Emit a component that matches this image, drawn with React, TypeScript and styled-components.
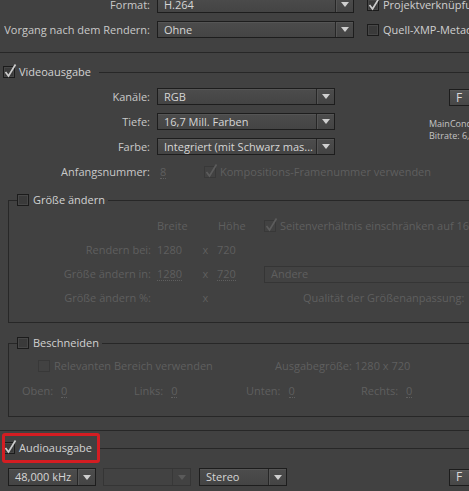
import React from "react";
import styled, { createGlobalStyle } from "styled-components";

const Global = createGlobalStyle`
  html, body { margin: 0; padding: 0; background: #414141; }
  * { box-sizing: border-box; }
`;

const Page = styled.div`
  width: 469px;
  height: 491px;
  overflow: hidden;
  background: #414141;
  font-family: "Open Sans", "DejaVu Sans", sans-serif;
  font-size: 11px;
  line-height: 14px;
  color: #c9c9c9;
`;

const TopGrid = styled.div`
  display: grid;
  grid-template-columns: 157px 210px 1fr;
  grid-auto-rows: 17px;
  row-gap: 8px;
  margin-top: -4px;
  align-items: center;
`;

const Label = styled.span<{ $disabled?: boolean }>`
  justify-self: end;
  padding-right: 7px;
  white-space: nowrap;
  color: ${(p) => (p.$disabled ? "#5f5f5f" : "#c9c9c9")};
`;

const Text = styled.span<{ $disabled?: boolean; $ml?: number }>`
  white-space: nowrap;
  color: ${(p) => (p.$disabled ? "#5f5f5f" : "#cfcfcf")};
  margin-left: ${(p) => p.$ml ?? 0}px;
`;

const Value = styled.span<{ $w?: number; $ml?: number }>`
  display: inline-block;
  flex: none;
  width: ${(p) => (p.$w ? `${p.$w}px` : "auto")};
  margin-left: ${(p) => p.$ml ?? 0}px;
  color: #5f5f5f;
  white-space: nowrap;
`;

const Dotted = styled.span`
  border-bottom: 1px dotted #5f5f5f;
  line-height: 12px;
  display: inline-block;
`;

const SelectBox = styled.div<{ $w: number; $disabled?: boolean; $h?: number }>`
  flex: none;
  width: ${(p) => p.$w}px;
  height: ${(p) => p.$h ?? 17}px;
  display: flex;
  align-items: stretch;
  border: 1px solid ${(p) => (p.$disabled ? "#353535" : "#1d1d1d")};
  background: ${(p) =>
    p.$disabled ? "#424242" : "linear-gradient(#4c4c4c, #444444)"};
  box-shadow: ${(p) => (p.$disabled ? "none" : "inset 0 1px 0 #555")};
`;

const SelectText = styled.span<{ $disabled?: boolean }>`
  flex: 1;
  padding-left: 6px;
  display: flex;
  align-items: center;
  white-space: nowrap;
  overflow: hidden;
  color: ${(p) => (p.$disabled ? "#5f5f5f" : "#d6d6d6")};
`;

const ArrowPart = styled.span<{ $disabled?: boolean }>`
  width: 18px;
  display: flex;
  align-items: center;
  justify-content: center;
  border-left: 1px solid ${(p) => (p.$disabled ? "#383838" : "#262626")};
  box-shadow: inset 1px 0 0 ${(p) => (p.$disabled ? "transparent" : "#555")};
`;

const Select: React.FC<{ w: number; text?: string; disabled?: boolean; noArrow?: boolean; h?: number }> = ({
  w,
  text,
  disabled,
  noArrow,
  h,
}) => (
  <SelectBox $w={w} $disabled={disabled} $h={h}>
    <SelectText $disabled={disabled}>{text}</SelectText>
    {!noArrow && (
      <ArrowPart $disabled={disabled}>
        <svg width="8" height="5" viewBox="0 0 8 5">
          <path d="M0 0 H8 L4 5 Z" fill={disabled ? "#5a5a5a" : "#cfcfcf"} />
        </svg>
      </ArrowPart>
    )}
  </SelectBox>
);

const CheckBoxBox = styled.span<{ $disabled?: boolean }>`
  position: relative;
  display: inline-block;
  flex: none;
  width: 12px;
  height: 12px;
  border: 1px solid ${(p) => (p.$disabled ? "#383838" : "#1b1b1b")};
  background: ${(p) => (p.$disabled ? "#424242" : "#3a3a3a")};
  box-shadow: ${(p) => (p.$disabled ? "none" : "inset 0 0 0 1px #474747")};
`;

const Tick = styled.svg`
  position: absolute;
  left: 0px;
  top: -3px;
  overflow: visible;
`;

const CheckBox: React.FC<{ checked?: boolean; disabled?: boolean }> = ({ checked, disabled }) => (
  <CheckBoxBox $disabled={disabled}>
    {checked && (
      <Tick width="12" height="14" viewBox="0 0 12 14">
        <path
          d="M1.5 8 L4.5 12 L11.5 0.5"
          fill="none"
          stroke={disabled ? "#5c5c5c" : "#cdcdcd"}
          strokeWidth="1.7"
        />
      </Tick>
    )}
  </CheckBoxBox>
);

const CheckRow = styled.div<{ $ml?: number }>`
  display: flex;
  align-items: center;
  gap: 4px;
  margin-left: ${(p) => p.$ml ?? 0}px;
  white-space: nowrap;
`;

const Divider = styled.div<{ $mt: number }>`
  height: 1px;
  background: #272727;
  margin-top: ${(p) => p.$mt}px;
`;

const SectionHeader = styled.div<{ $mt: number }>`
  position: relative;
  display: flex;
  align-items: center;
  height: 14px;
  margin-top: ${(p) => p.$mt}px;
  padding-left: 3px;
  gap: 4px;
`;

const HeaderText = styled.span`
  color: #d2d2d2;
  white-space: nowrap;
`;

const HeaderLine = styled.span`
  flex: 1;
  height: 1px;
  background: #272727;
  margin-left: 4px;
`;

const Highlight = styled.span`
  position: absolute;
  left: 2px;
  top: -8px;
  width: 98px;
  height: 30px;
  border: 3px solid #d41d22;
  border-radius: 3px;
`;

const VideoBody = styled.div`
  display: flex;
  margin-top: 9px;
`;

const VideoGrid = styled.div`
  flex: none;
  display: grid;
  grid-template-columns: 157px 178px;
  grid-auto-rows: 17px;
  row-gap: 8px;
  align-items: center;
`;

const InlineRow = styled.div`
  display: flex;
  align-items: center;
`;

const SideColumn = styled.div`
  flex: none;
  display: flex;
  flex-direction: column;
  padding-top: 1px;
`;

const SideButton = styled.div<{ $ml: number }>`
  flex: none;
  margin-left: ${(p) => p.$ml}px;
  width: 60px;
  height: 17px;
  border: 1px solid #1c1c1c;
  background: linear-gradient(#535353, #474747);
  box-shadow: inset 0 1px 0 #5a5a5a;
  color: #dadada;
  padding-left: 6px;
  display: flex;
  align-items: center;
  font-size: 12px;
`;

const SmallInfo = styled.div`
  margin-left: 94px;
  margin-top: 12px;
  font-size: 9px;
  line-height: 12px;
  color: #c4c4c4;
  white-space: nowrap;
`;

const FieldSet = styled.fieldset<{ $mt: number }>`
  margin: ${(p) => p.$mt}px -20px 0 8px;
  padding: 0;
  border: 1px solid #272727;
  border-right: none;
  min-width: 0;
`;

const Legend = styled.legend`
  margin-left: 8px;
  padding: 0 3px 0 0;
  display: flex;
  align-items: center;
  gap: 4px;
  color: #d2d2d2;
  height: 14px;
`;

const ResizeGrid = styled.div`
  display: grid;
  grid-template-columns: 142px 6px 40px 17px 3px 47px 1fr;
  grid-auto-rows: 24px;
  align-items: center;
  padding: 7px 0 12px;
  white-space: nowrap;
`;

const Cell = styled.span<{ $col: number; $center?: boolean; $end?: boolean; $ml?: number }>`
  grid-column: ${(p) => p.$col};
  justify-self: ${(p) => (p.$center ? "center" : p.$end ? "end" : "start")};
  margin-left: ${(p) => p.$ml ?? 0}px;
  color: #5f5f5f;
  white-space: nowrap;
`;

const CropBody = styled.div`
  padding: 4px 0 12px;
  display: grid;
  grid-template-rows: 24px 26px;
  align-items: center;
`;

const CropTop = styled.div`
  display: grid;
  grid-template-columns: 266px 1fr;
  align-items: center;
`;

const SidesRow = styled.div`
  display: grid;
  grid-template-columns: 112px 112px 115px 1fr;
  padding-left: 13px;
  align-items: center;
`;

const SideField = styled.span`
  color: #5f5f5f;
  white-space: nowrap;
  display: flex;
  gap: 8px;
  align-items: center;
`;

const AudioRow = styled.div`
  display: flex;
  align-items: center;
  margin-top: 13px;
  padding-left: 8px;
`;

const Gap = styled.span<{ $w: number }>`
  width: ${(p) => p.$w}px;
  flex: none;
`;

export default function App() {
  return (
    <Page>
      <Global />
      <TopGrid>
        <Label>Format:</Label>
        <Select w={197} text="H.264" />
        <CheckRow>
          <CheckBox checked />
          <Text>Projektverknüpfung</Text>
        </CheckRow>
        <Label>Vorgang nach dem Rendern:</Label>
        <Select w={197} text="Ohne" />
        <CheckRow>
          <CheckBox />
          <Text>Quell-XMP-Metadaten</Text>
        </CheckRow>
      </TopGrid>

      <Divider $mt={14} />

      <SectionHeader $mt={12}>
        <CheckBox checked />
        <HeaderText>Videoausgabe</HeaderText>
        <HeaderLine />
      </SectionHeader>

      <VideoBody>
        <VideoGrid>
          <Label>Kanäle:</Label>
          <Select w={178} text="RGB" />
          <Label>Tiefe:</Label>
          <Select w={178} text="16,7 Mill. Farben" />
          <Label>Farbe:</Label>
          <Select w={178} text="Integriert (mit Schwarz mas..." />
          <Label>Anfangsnummer:</Label>
          <InlineRow>
            <Value $w={44} $ml={3}>
              <Dotted>8</Dotted>
            </Value>
            <CheckRow>
              <CheckBox checked disabled />
              <Text $disabled>Kompositions-Framenummer verwenden</Text>
            </CheckRow>
          </InlineRow>
        </VideoGrid>
        <SideColumn>
          <SideButton $ml={114}>F</SideButton>
          <SmallInfo>
            MainConcept
            <br />
            Bitrate: 6,
          </SmallInfo>
        </SideColumn>
      </VideoBody>

      <FieldSet $mt={13}>
        <Legend>
          <CheckBox />
          <span>Größe ändern</span>
        </Legend>
        <ResizeGrid>
          <Cell $col={3}>Breite</Cell>
          <Cell $col={6} $ml={1}>Höhe</Cell>
          <Cell $col={7}>
            <CheckRow>
              <CheckBox checked disabled />
              <Text $disabled>Seitenverhältnis einschränken auf 16:9</Text>
            </CheckRow>
          </Cell>

          <Cell $col={1} $end>Rendern bei:</Cell>
          <Cell $col={3}>1280</Cell>
          <Cell $col={4} $center>x</Cell>
          <Cell $col={6}>720</Cell>

          <Cell $col={1} $end>Größe ändern in:</Cell>
          <Cell $col={3}>
            <Dotted>1280</Dotted>
          </Cell>
          <Cell $col={4} $center>x</Cell>
          <Cell $col={6}>
            <Dotted>720</Dotted>
          </Cell>
          <Cell $col={7}>
            <Select w={230} text="Andere" disabled noArrow />
          </Cell>

          <Cell $col={1} $end>Größe ändern %:</Cell>
          <Cell $col={4} $center>x</Cell>
          <Cell $col={7} $ml={39}>Qualität der Größenanpassung:</Cell>
        </ResizeGrid>
      </FieldSet>

      <FieldSet $mt={13}>
        <Legend>
          <CheckBox />
          <span>Beschneiden</span>
        </Legend>
        <CropBody>
          <CropTop>
            <CheckRow $ml={29}>
              <CheckBox disabled />
              <Text $disabled>Relevanten Bereich verwenden</Text>
            </CheckRow>
            <Text $disabled>Ausgabegröße: 1280 x 720</Text>
          </CropTop>
          <SidesRow>
            <SideField>
              Oben: <Dotted>0</Dotted>
            </SideField>
            <SideField>
              Links: <Dotted>0</Dotted>
            </SideField>
            <SideField>
              Unten: <Dotted>0</Dotted>
            </SideField>
            <SideField>
              Rechts: <Dotted>0</Dotted>
            </SideField>
          </SidesRow>
        </CropBody>
      </FieldSet>

      <Divider $mt={13} />

      <SectionHeader $mt={10}>
        <CheckBox checked />
        <HeaderText>Audioausgabe</HeaderText>
        <HeaderLine />
        <Highlight />
      </SectionHeader>

      <AudioRow>
        <Select w={88} h={18} text="48,000 kHz" />
        <Gap $w={7} />
        <Select w={88} h={18} disabled />
        <Gap $w={8} />
        <Select w={88} h={18} text="Stereo" />
        <SideButton $ml={162}>F</SideButton>
      </AudioRow>
    </Page>
  );
}
